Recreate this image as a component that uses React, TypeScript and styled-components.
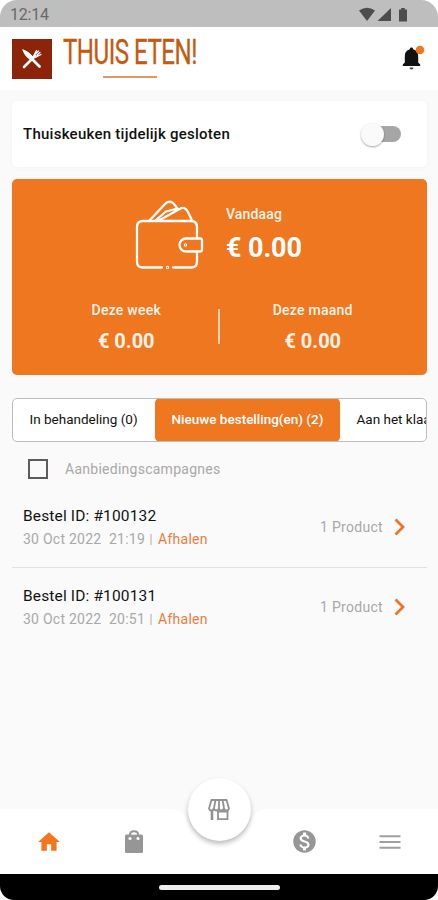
import React from "react";
import styled, { createGlobalStyle } from "styled-components";
import { MdHome, MdMonetizationOn } from "react-icons/md";

const GlobalStyle = createGlobalStyle`
  * { box-sizing: border-box; }
  body { margin: 0; background: #fff; font-family: Roboto, "Liberation Sans", sans-serif; }
`;

const Screen = styled.div`
  width: 438px;
  height: 900px;
  display: flex;
  flex-direction: column;
  background: #fafafa;
  overflow: hidden;
`;

const TopArea = styled.div`
  background: #fff;
  height: 90px;
  flex: none;
`;

const StatusBar = styled.div`
  height: 27px;
  background: #bebebe;
  border-radius: 17px 17px 0 0;
  display: flex;
  align-items: center;
  justify-content: space-between;
  padding: 2px 30px 0 10px;
`;

const Header = styled.header`
  display: flex;
  align-items: flex-start;
  padding: 12px 12px 0;
  height: 63px;
`;

const Logo = styled.div`
  width: 40px;
  height: 40px;
  background: #8c2409;
  display: grid;
  place-items: center;
`;

const Brand = styled.div`
  margin-left: 11px;
  width: 136px;
  display: flex;
  flex-direction: column;
  align-items: center;
`;

const Rule = styled.div`
  width: 54px;
  height: 2px;
  background: #dc9a68;
  margin: 2px 0 0 -3px;
`;

const BellBox = styled.div`
  margin: 6px -1px 0 auto;
  height: 28px;
`;

const Main = styled.main`
  flex: 1;
  padding: 11px 11px 0 12px;
`;

const ClosedCard = styled.section`
  height: 66px;
  background: #fff;
  border-radius: 5px;
  box-shadow: 0 0 5px rgba(0, 0, 0, 0.04);
  display: flex;
  align-items: center;
  justify-content: space-between;
  padding: 0 24px 0 11px;
`;

const Track = styled.div`
  width: 38px;
  height: 16px;
  margin-right: 2px;
  border-radius: 8px;
  background: #a6a6a6;
  display: flex;
  align-items: center;
`;

const Thumb = styled.div`
  width: 23px;
  height: 23px;
  flex: none;
  margin-left: -2px;
  border-radius: 50%;
  background: #fafafa;
  box-shadow: 0 1px 2px rgba(0, 0, 0, 0.35);
`;

const Text = styled.span<{ $size: number; $weight?: number; $color?: string; $track?: number; $line?: number }>`
  display: block;
  white-space: pre;
  font-size: ${(p) => p.$size}px;
  font-weight: ${(p) => p.$weight ?? 400};
  color: ${(p) => p.$color ?? "#111"};
  letter-spacing: ${(p) => p.$track ?? 0}px;
  line-height: ${(p) => p.$line ?? 20}px;
`;

const Earnings = styled.section`
  margin-top: 12px;
  height: 196px;
  background: #ee7720;
  border-radius: 5px;
  color: #fff;
`;

const Today = styled.div`
  display: flex;
  height: 115px;
  padding: 21px 0 0 123px;
`;

const TodayText = styled.div`
  margin-left: 21px;
  padding-top: 4px;
`;

const Periods = styled.div`
  display: grid;
  grid-template-columns: 1fr 2px 1fr;
  padding: 6px 22px 0 22px;
`;

const Period = styled.div`
  display: flex;
  flex-direction: column;
  align-items: center;
`;

const Divider = styled.div`
  height: 35px;
  margin: 9px 1px 0 -1px;
  background: #fbd3b4;
`;

const Tabs = styled.nav`
  margin-top: 23px;
  height: 44px;
  border: 1px solid #bdbdbd;
  border-radius: 5px;
  background: #fff;
  display: flex;
  overflow: hidden;
`;

const Tab = styled.div<{ $width: number; $active?: boolean }>`
  flex: none;
  width: ${(p) => p.$width}px;
  padding: 11px 0 0 16.500px;
  margin: -1px 0;
  border-radius: 5px;
  background: ${(p) => (p.$active ? "#ee7720" : "transparent")};
`;

const CheckRow = styled.label`
  display: flex;
  align-items: center;
  height: 54px;
  padding-left: 16px;
  gap: 17px;
`;

const CheckBox = styled.div`
  width: 20px;
  height: 20px;
  border: 2px solid #5c5c5c;
`;

const Order = styled.article`
  display: flex;
  align-items: flex-start;
  justify-content: space-between;
  height: 71px;
  padding: 10px 22px 0 11px;

  & + & {
    border-top: 1.500px solid #e2e2e2;
    height: 81px;
    padding-top: 18px;
  }
`;

const Meta = styled.div`
  display: flex;
  margin-top: 3px;
`;

const Count = styled.div`
  display: flex;
  align-items: center;
  gap: 11px;
  padding-top: 11px;
`;

const BottomBar = styled.nav`
  position: relative;
  height: 65px;
  display: grid;
  grid-template-columns: 97px 74px 96px 75px 96px;
  align-items: center;
  justify-items: center;
  background: #fff;
  flex: none;
`;

const NotchShape = styled.svg`
  position: absolute;
  left: 0;
  top: 0;
`;

const Item = styled.div<{ $active?: boolean }>`
  position: relative;
  display: flex;
  color: ${(p) => (p.$active ? "#f4751c" : "#969696")};
`;

const StoreButton = styled.button`
  position: absolute;
  left: 188px;
  top: -31px;
  width: 63px;
  height: 63px;
  padding: 0;
  border: 0;
  border-radius: 50%;
  background: #fff;
  box-shadow: 0 3px 5px rgba(0, 0, 0, 0.26);
  display: grid;
  place-items: center;
`;

const GestureWrap = styled.div`
  background: #fff;
  height: 26px;
  flex: none;
`;

const GestureBar = styled.div`
  height: 26px;
  background: #000;
  border-radius: 0 0 14px 14px;
  display: flex;
  justify-content: center;
  padding-top: 11px;
`;

const Pill = styled.div`
  width: 121px;
  height: 5px;
  border-radius: 3px;
  background: #eee;
`;

const SignalIcons = () => (
  <svg width="50" height="16" viewBox="0 0 50 16" fill="#4c4c4c">
    <path d="M1 3.500Q9-2 17 3.500L9 14z" />
    <path d="M19.500 14L33 1V14z" />
    <path d="M41 2.500h2.200V1h3.600v1.500H49V14.500H41z" />
  </svg>
);

const Cutlery = () => (
  <svg width="22" height="22" viewBox="0 0 22 22" fill="none" stroke="#fff" strokeLinecap="round">
    <path d="M2 2C6 3 9.500 6 12.500 9.500L10 12C6 9.500 3 6 2 2z" fill="#fff" strokeWidth="1" />
    <path d="M11 11l7.500 7.500" strokeWidth="2.800" />
    <path d="M3 19L14 8" strokeWidth="2.600" />
    <path d="M12.800 7.500L15.500 2.500M14.500 6L17.500 3M15.800 7.200L19 4.500M14.800 9.200L20 6.500M12.800 7.500Q13 9.500 14.800 9.200" strokeWidth="1.300" />
  </svg>
);

const WordmarkSvg = styled.svg`
  display: block;
  overflow: visible;
`;

const Wordmark = () => (
  <WordmarkSvg width="136" height="35" viewBox="0 0 136 35">
    <text
      transform="translate(0 24.500) scale(.7 1)"
      textLength="192"
      fontFamily="Roboto, sans-serif"
      fontSize="34.500"
      fill="#c45a12"
      stroke="#c45a12"
      strokeWidth=".3"
    >
      THUIS ETEN!
    </text>
  </WordmarkSvg>
);

const Bell = () => (
  <svg width="26" height="28" viewBox="0 0 26 28">
    <path d="M10.500 2.500c1.100 0 1.600.7 1.700 1.700 3.200.8 5 3.300 5 6.800v6.500l2 2V21H1.800v-1.500l2-2V11c0-3.500 1.800-6 5-6.800.1-1 .6-1.700 1.700-1.700z" fill="#111" />
    <path d="M8.500 22.500h4a2 2 0 0 1-4 0z" fill="#444" />
    <circle cx="19" cy="5" r="4.300" fill="#ee7720" />
  </svg>
);

const Wallet = () => (
  <svg width="70" height="72" viewBox="0 0 70 72" fill="none" stroke="#fff" strokeWidth="2.300" strokeLinecap="round" strokeLinejoin="round">
    <path d="M27 67.500H8Q2 67.500 2 61.500V27Q2 21 8 21H56Q62 21 62 27V37M62 52V61.500Q62 67.500 56 67.500H38" />
    <circle cx="32.500" cy="67.500" r=".5" />
    <path d="M65 38.500Q67 38.500 67 40.500V49.500Q67 51.500 65 51.500H51a6.500 6.500 0 0 1 0-13z" />
    <circle cx="50.500" cy="45" r=".5" />
    <path d="M14.500 20.500L30.500 3.500Q34.500 0 38.500 3.500L42.500 8.500M24 20.500L45 8.800Q50 6 53 12L57 20.500M20.500 20.500L31 11.500L42.500 8.500" />
  </svg>
);

const Chevron = () => (
  <svg width="11" height="18" viewBox="0 0 11 18" fill="none" stroke="#f07427" strokeWidth="2.800">
    <path d="M1.500 1.500L9 9L1.500 16.500" />
  </svg>
);

const Bag = () => (
  <svg width="20" height="25" viewBox="0 0 20 25">
    <path d="M6 8V5.500Q6 2.200 10 2.200T14 5.500V8" fill="none" stroke="#969696" strokeWidth="2" />
    <path d="M2.500 5.500h15q1.500 0 1.500 1.500v15.500q0 1.500-1.500 1.500h-15Q1 24 1 22.500V7q0-1.500 1.500-1.500z" fill="#969696" />
    <path d="M7.500 5.500q.3-1.800 2.500-1.800t2.500 1.800z" fill="#fff" />
    <circle cx="6" cy="9.500" r="1.500" fill="#fff" />
    <circle cx="14" cy="9.500" r="1.500" fill="#fff" />
  </svg>
);

const Menu = () => (
  <svg width="22" height="16" viewBox="0 0 22 16" stroke="#a0a0a0" strokeWidth="2">
    <path d="M.5 2.300h21M.5 8h21M.5 13.700h21" />
  </svg>
);

const Store = () => (
  <svg width="24" height="24" viewBox="0 0 24 24" fill="none" stroke="#929292" strokeWidth="1.800">
    <path d="M3.500 2H18.500L21 10.500Q20.500 12.500 18.500 12.500Q16 12.500 16 10Q15.500 12.500 13.500 12.500Q11 12.500 11 10Q10.500 12.500 8.500 12.500Q6 12.500 6 10Q5.500 12.500 3.500 12.500Q1.500 12.500 1 10.500zM7.500 2L6 10M11 2V10M14.500 2L16 10" />
    <path d="M4 12.500V22" strokeWidth="2.600" />
    <path d="M10 21.200V13.500H19.500V21.200z" />
  </svg>
);

const orders = [
  { id: "#100132", time: "21:19" },
  { id: "#100131", time: "20:51" },
];

export default function App() {
  return (
    <Screen>
      <GlobalStyle />
      <TopArea>
        <StatusBar>
          <Text $size={16} $color="#686868" $track={-0.2}>12:14</Text>
          <SignalIcons />
        </StatusBar>
        <Header>
          <Logo><Cutlery /></Logo>
          <Brand><Wordmark /><Rule /></Brand>
          <BellBox><Bell /></BellBox>
        </Header>
      </TopArea>
      <Main>
        <ClosedCard>
          <Text $size={15} $weight={500} $track={0.26}>Thuiskeuken tijdelijk gesloten</Text>
          <Track><Thumb /></Track>
        </ClosedCard>
        <Earnings>
          <Today>
            <Wallet />
            <TodayText>
              <Text $size={14} $weight={500} $color="#fff3e9" $track={0.15}>Vandaag</Text>
              <Text $size={27} $weight={700} $color="#fff" $track={-0.1} $line={48}>€ 0.00</Text>
            </TodayText>
          </Today>
          <Periods>
            <Period>
              <Text $size={14} $weight={500} $color="#fff3e9" $track={0.25}>Deze week</Text>
              <Text $size={20} $weight={700} $color="#fff3e9" $line={42}>€ 0.00</Text>
            </Period>
            <Divider />
            <Period>
              <Text $size={14} $weight={500} $color="#fff3e9" $track={0.25}>Deze maand</Text>
              <Text $size={20} $weight={700} $color="#fff3e9" $line={42}>€ 0.00</Text>
            </Period>
          </Periods>
        </Earnings>
        <Tabs>
          <Tab $width={142}><Text $size={13.5}>In behandeling (0)</Text></Tab>
          <Tab $width={185} $active><Text $size={13.5} $weight={500} $color="#fff">Nieuwe bestelling(en) (2)</Text></Tab>
          <Tab $width={150}><Text $size={13.5}>Aan het klaarmaken (0)</Text></Tab>
        </Tabs>
        <CheckRow>
          <CheckBox />
          <Text $size={14} $color="#a8a8a8" $track={0.26}>Aanbiedingscampagnes</Text>
        </CheckRow>
        {orders.map((o) => (
          <Order key={o.id}>
            <div>
              <Text $size={15.5} $track={0.15}>Bestel ID: {o.id}</Text>
              <Meta>
                <Text $size={14} $color="#a8a8a8" $track={0.25}>{`30 Oct 2022  ${o.time}`}</Text>
                <Text $size={12} $color="#a8a8a8" $track={1.4}>{" | "}</Text>
                <Text $size={14} $color="#ee7a42" $track={0.25}>Afhalen</Text>
              </Meta>
            </div>
            <Count>
              <Text $size={14} $color="#a8a8a8" $track={0.3}>1 Product</Text>
              <Chevron />
            </Count>
          </Order>
        ))}
      </Main>
      <BottomBar>
        <NotchShape width="438" height="65">
          <path d="M0 0H168Q183 0 186 9A35 35 0 0 0 252 9Q255 0 270 0H438V-1H0z" fill="#fafafa" />
        </NotchShape>
        <Item $active><MdHome size={26} /></Item>
        <Item><Bag /></Item>
        <StoreButton><Store /></StoreButton>
        <span />
        <Item><MdMonetizationOn size={27} /></Item>
        <Item><Menu /></Item>
      </BottomBar>
      <GestureWrap><GestureBar><Pill /></GestureBar></GestureWrap>
    </Screen>
  );
}
